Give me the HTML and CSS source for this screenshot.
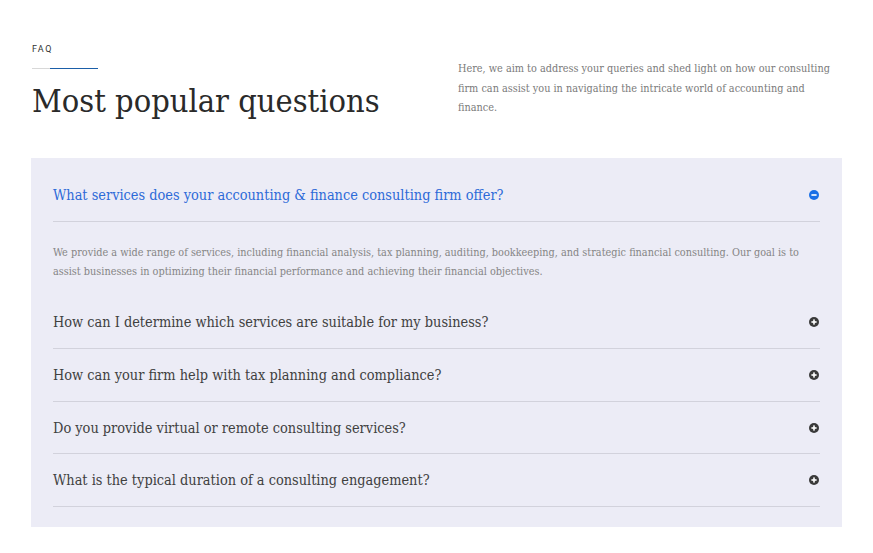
FILE: index.html
```html
<!DOCTYPE html>
<html>
<head>
<meta charset="utf-8">
<link rel="stylesheet" href="styles.css">
</head>
<body>
<section class="faq">
  <header class="faq-head">
    <div class="faq-title">
      <div class="eyebrow">FAQ</div>
      <div class="rule"><span class="rule-accent"></span></div>
      <h2 class="heading">Most popular questions</h2>
    </div>
    <p class="intro">Here, we aim to address your queries and shed light on how our consulting firm can assist you in navigating the intricate world of accounting and finance.</p>
  </header>
  <div class="panel">
    <div class="item open">
      <div class="q">
        <span class="q-text">What services does your accounting &amp; finance consulting firm offer?</span>
        <svg class="icon" viewBox="0 0 10 10"><circle cx="5" cy="5" r="5" fill="currentColor"/><rect x="2.4" y="4.2" width="5.2" height="1.6" fill="#fff"/></svg>
      </div>
      <div class="a">We provide a wide range of services, including financial analysis, tax planning, auditing, bookkeeping, and strategic financial consulting. Our goal is to assist businesses in optimizing their financial performance and achieving their financial objectives.</div>
    </div>
    <div class="item">
      <div class="q">
        <span class="q-text">How can I determine which services are suitable for my business?</span>
        <svg class="icon" viewBox="0 0 10 10"><circle cx="5" cy="5" r="5" fill="currentColor"/><rect x="2.4" y="4.2" width="5.2" height="1.6" fill="#fff"/><rect x="4.2" y="2.4" width="1.6" height="5.2" fill="#fff"/></svg>
      </div>
    </div>
    <div class="item">
      <div class="q">
        <span class="q-text">How can your firm help with tax planning and compliance?</span>
        <svg class="icon" viewBox="0 0 10 10"><circle cx="5" cy="5" r="5" fill="currentColor"/><rect x="2.4" y="4.2" width="5.2" height="1.6" fill="#fff"/><rect x="4.2" y="2.4" width="1.6" height="5.2" fill="#fff"/></svg>
      </div>
    </div>
    <div class="item">
      <div class="q">
        <span class="q-text">Do you provide virtual or remote consulting services?</span>
        <svg class="icon" viewBox="0 0 10 10"><circle cx="5" cy="5" r="5" fill="currentColor"/><rect x="2.4" y="4.2" width="5.2" height="1.6" fill="#fff"/><rect x="4.2" y="2.4" width="1.6" height="5.2" fill="#fff"/></svg>
      </div>
    </div>
    <div class="item">
      <div class="q">
        <span class="q-text">What is the typical duration of a consulting engagement?</span>
        <svg class="icon" viewBox="0 0 10 10"><circle cx="5" cy="5" r="5" fill="currentColor"/><rect x="2.4" y="4.2" width="5.2" height="1.6" fill="#fff"/><rect x="4.2" y="2.4" width="1.6" height="5.2" fill="#fff"/></svg>
      </div>
    </div>
  </div>
</section>
</body>
</html>
```

FILE: styles.css
```css
* { box-sizing: border-box; }
html, body { margin: 0; padding: 0; background: #fff; }
body { font-family: "DejaVu Serif Condensed", "DejaVu Serif", serif; font-stretch: condensed; color: #222; }

.faq { padding: 0 31px 0 31px; width: 873px; }

.faq-head {
  display: flex;
  justify-content: space-between;
  height: 158px;
  padding-top: 43px;
}
.faq-title { width: 400px; padding-left: 1px; }
.eyebrow {
  font-family: Roboto, "Liberation Sans", sans-serif;
  font-stretch: normal;
  font-size: 9px;
  letter-spacing: 1.6px;
  color: #333;
  line-height: 12px;
}
.rule {
  margin-top: 13px;
  width: 66px;
  height: 1px;
  background: #d8d8d8;
  display: flex;
  justify-content: flex-end;
}
.rule-accent { width: 48px; height: 1px; background: #1b5fa8; }
.heading {
  margin: 12px 0 0 0;
  font-size: 32.3px;
  font-weight: 300;
  line-height: 40px;
  color: #2a2a2a;
}
.intro {
  margin: 16px 0 0 0;
  width: 384px;
  font-size: 10.8px;
  line-height: 19.5px;
  color: #7a7a7a;
}

.panel {
  background: #ececf6;
  padding: 11px 22px 20px 22px;
}
.item { border-bottom: 1px solid #d2d2dc; }
.item.open { border-bottom: none; }
.q {
  display: flex;
  justify-content: space-between;
  align-items: center;
  height: 51.7px;
}
.q-text { font-size: 14.4px; color: #404040; }
.item.open .q-text { color: #2d6ad8; }
.icon { width: 10px; height: 10px; color: #3a3a3a; margin-right: 1px; }
.item.open .icon { color: #1a6fe6; }
.a {
  border-top: 1px solid #d2d2dc;
  padding: 21px 0 15.6px 0;
  font-size: 10.8px;
  line-height: 19px;
  color: #858585;
}
```
